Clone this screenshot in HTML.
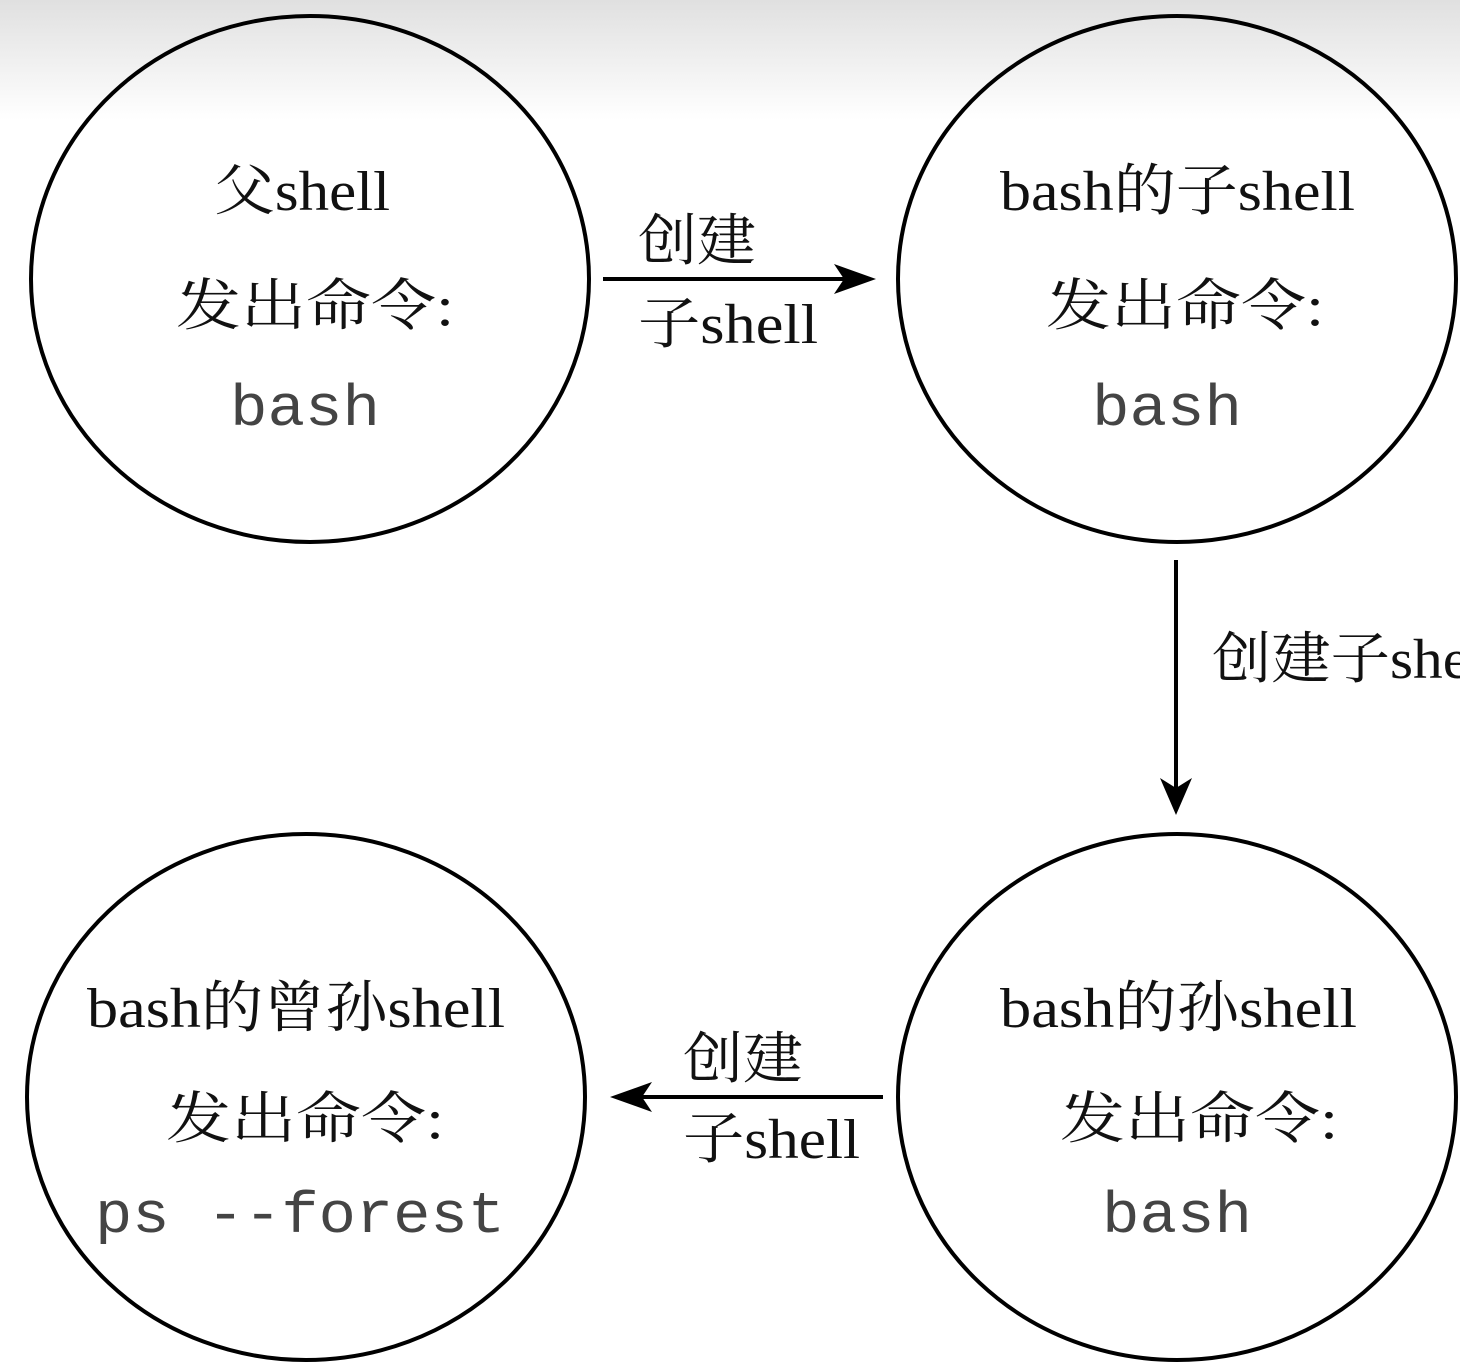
<!DOCTYPE html>
<html><head><meta charset="utf-8"><style>
html,body{margin:0;padding:0;width:1460px;height:1368px;overflow:hidden;background:#fff}
svg{display:block}
.s{font-family:"Liberation Serif","Noto Serif CJK SC",serif;font-size:56px;fill:#111}
.m{font-family:"Liberation Mono",monospace;font-size:58px;fill:#444}
</style></head><body>
<svg width="1460" height="1368" viewBox="0 0 1460 1368">
<defs><linearGradient id="g" x1="0" y1="0" x2="0" y2="1">
<stop offset="0" stop-color="#e0e0e0"/><stop offset="1" stop-color="#fff"/></linearGradient></defs>
<rect x="0" y="0" width="1460" height="120" fill="url(#g)"/>
<g fill="none" stroke="#000" stroke-width="4">
<ellipse cx="310" cy="279" rx="279" ry="263"/>
<ellipse cx="1177" cy="279" rx="279" ry="263"/>
<ellipse cx="306" cy="1097" rx="279" ry="263"/>
<ellipse cx="1177" cy="1097" rx="279" ry="263"/>
<line x1="603" y1="279" x2="850" y2="279"/>
<line x1="1176" y1="560" x2="1176" y2="790"/>
<line x1="883" y1="1097" x2="635" y2="1097"/>
</g>
<g fill="#000">
<path d="M876 279 L834 264 L844 279 L834 294 Z"/>
<path d="M1176 815 L1160 778 L1176 788 L1192 778 Z"/>
<path d="M610 1097 L652 1082 L642 1097 L652 1112 Z"/>
</g>
<g lengthAdjust="spacingAndGlyphs">
<text class="s" x="214" y="210" textLength="176" lengthAdjust="spacingAndGlyphs">父shell</text>
<text class="s" x="176" y="325" textLength="278" lengthAdjust="spacingAndGlyphs">发出命令:</text>
<text class="m" x="230" y="425" textLength="150" lengthAdjust="spacingAndGlyphs">bash</text>
<text class="s" x="1000" y="210" textLength="355" lengthAdjust="spacingAndGlyphs">bash的子shell</text>
<text class="s" x="1046" y="325" textLength="278" lengthAdjust="spacingAndGlyphs">发出命令:</text>
<text class="m" x="1092" y="425" textLength="150" lengthAdjust="spacingAndGlyphs">bash</text>
<text class="s" x="87" y="1027" textLength="418" lengthAdjust="spacingAndGlyphs">bash的曾孙shell</text>
<text class="s" x="166" y="1138" textLength="278" lengthAdjust="spacingAndGlyphs">发出命令:</text>
<text class="m" x="95" y="1232" textLength="410" lengthAdjust="spacingAndGlyphs">ps --forest</text>
<text class="s" x="1000" y="1027" textLength="357" lengthAdjust="spacingAndGlyphs">bash的孙shell</text>
<text class="s" x="1060" y="1138" textLength="278" lengthAdjust="spacingAndGlyphs">发出命令:</text>
<text class="m" x="1102" y="1232" textLength="150" lengthAdjust="spacingAndGlyphs">bash</text>
<text class="s" x="638" y="260" textLength="118" lengthAdjust="spacingAndGlyphs">创建</text>
<text class="s" x="638" y="343" textLength="180" lengthAdjust="spacingAndGlyphs">子shell</text>
<text class="s" x="1212" y="678" textLength="290" lengthAdjust="spacingAndGlyphs">创建子shell</text>
<text class="s" x="683" y="1078" textLength="120" lengthAdjust="spacingAndGlyphs">创建</text>
<text class="s" x="683" y="1158" textLength="177" lengthAdjust="spacingAndGlyphs">子shell</text>
</g>
</svg>
</body></html>
